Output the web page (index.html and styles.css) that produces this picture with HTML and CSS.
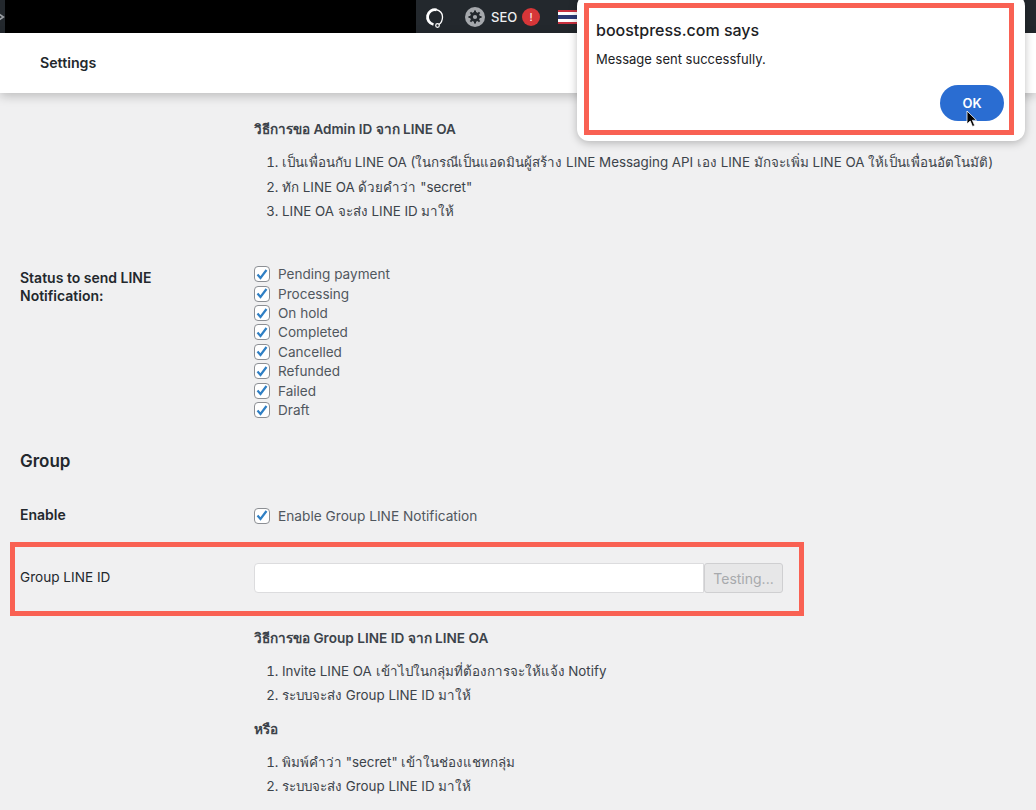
FILE: index.html
```html
<!DOCTYPE html>
<html lang="th">
<head>
<meta charset="utf-8">
<title>Settings</title>
<link rel="stylesheet" href="styles.css">
</head>
<body>
<div class="adminbar">
  <div class="bar-left"><svg class="bar-diamond" width="6" height="14" viewBox="0 0 6 14"><path d="M-2 3l6 4-6 4" fill="none" stroke="#9a9ea3" stroke-width="2"/></svg></div>
  <div class="bar-black"></div>
  <div class="bar-dark">
    <svg class="bar-q" width="20" height="24" viewBox="0 0 20 24"><path d="M8.500 19.500A7.500 7.500 0 1 1 11.500 4.800" fill="none" stroke="#fff" stroke-width="2.800"/><path d="M11 4.500c4 1 6.500 4 6.500 7.500 0 3.500-1.500 6-3.500 7.500" fill="none" stroke="#fff" stroke-width="1.300"/><circle cx="12.500" cy="20.500" r="1.800" fill="none" stroke="#fff" stroke-width="1.200"/></svg>
    <svg class="bar-gear" width="20" height="20" viewBox="0 0 20 20"><circle cx="10" cy="10" r="10" fill="#a5a8ac"/><circle cx="10" cy="10" r="3.500" fill="none" stroke="#23282d" stroke-width="2.800"/><path d="M10 3.500v3M10 13.500v3M3.500 10h3M13.500 10h3M5.400 5.400l2 2M12.600 12.600l2 2M14.600 5.400l-2 2M7.400 12.600l-2 2" stroke="#23282d" stroke-width="2"/></svg>
    <span class="bar-seo">SEO</span>
    <span class="bar-badge">!</span>
    <span class="bar-flag"></span>
  </div>
</div>
<header class="subhead"><span class="subhead-title">Settings</span></header>
<main class="content">
  <section class="help help-admin">
    <h4 class="help-title">วิธีการขอ Admin ID จาก LINE OA</h4>
    <ol class="help-list">
      <li>เป็นเพื่อนกับ LINE OA (ในกรณีเป็นแอดมินผู้สร้าง LINE Messaging API เอง LINE มักจะเพิ่ม LINE OA ให้เป็นเพื่อนอัตโนมัติ)</li>
      <li>ทัก LINE OA ด้วยคำว่า "secret"</li>
      <li>LINE OA จะส่ง LINE ID มาให้</li>
    </ol>
  </section>
  <section class="row row-status">
    <div class="label label-bold">Status to send LINE Notification:</div>
    <div class="checks">
      <label class="check"><span class="box"><svg width="12" height="11" viewBox="0 0 12 11"><path d="M1.500 5.500l3 3.500 6-8" fill="none" stroke="#2f7fc4" stroke-width="2.200"/></svg></span>Pending payment</label>
      <label class="check"><span class="box"><svg width="12" height="11" viewBox="0 0 12 11"><path d="M1.500 5.500l3 3.500 6-8" fill="none" stroke="#2f7fc4" stroke-width="2.200"/></svg></span>Processing</label>
      <label class="check"><span class="box"><svg width="12" height="11" viewBox="0 0 12 11"><path d="M1.500 5.500l3 3.500 6-8" fill="none" stroke="#2f7fc4" stroke-width="2.200"/></svg></span>On hold</label>
      <label class="check"><span class="box"><svg width="12" height="11" viewBox="0 0 12 11"><path d="M1.500 5.500l3 3.500 6-8" fill="none" stroke="#2f7fc4" stroke-width="2.200"/></svg></span>Completed</label>
      <label class="check"><span class="box"><svg width="12" height="11" viewBox="0 0 12 11"><path d="M1.500 5.500l3 3.500 6-8" fill="none" stroke="#2f7fc4" stroke-width="2.200"/></svg></span>Cancelled</label>
      <label class="check"><span class="box"><svg width="12" height="11" viewBox="0 0 12 11"><path d="M1.500 5.500l3 3.500 6-8" fill="none" stroke="#2f7fc4" stroke-width="2.200"/></svg></span>Refunded</label>
      <label class="check"><span class="box"><svg width="12" height="11" viewBox="0 0 12 11"><path d="M1.500 5.500l3 3.500 6-8" fill="none" stroke="#2f7fc4" stroke-width="2.200"/></svg></span>Failed</label>
      <label class="check"><span class="box"><svg width="12" height="11" viewBox="0 0 12 11"><path d="M1.500 5.500l3 3.500 6-8" fill="none" stroke="#2f7fc4" stroke-width="2.200"/></svg></span>Draft</label>
    </div>
  </section>
  <h3 class="group-title">Group</h3>
  <section class="row row-enable">
    <div class="label label-bold label-enable">Enable</div>
    <label class="check check-enable"><span class="box"><svg width="12" height="11" viewBox="0 0 12 11"><path d="M1.500 5.500l3 3.500 6-8" fill="none" stroke="#2f7fc4" stroke-width="2.200"/></svg></span>Enable Group LINE Notification</label>
  </section>
  <section class="row row-group">
    <div class="label label-id">Group LINE ID</div>
    <div class="field">
      <input class="text-input" type="text" aria-label="Group LINE ID">
      <button class="test-btn" type="button" disabled>Testing...</button>
    </div>
  </section>
  <section class="help help-group">
    <h4 class="help-title help-title-wide">วิธีการขอ Group LINE ID จาก LINE OA</h4>
    <ol class="help-list help-list-tight">
      <li>Invite LINE OA เข้าไปในกลุ่มที่ต้องการจะให้แจ้ง Notify</li>
      <li>ระบบจะส่ง Group LINE ID มาให้</li>
    </ol>
    <h4 class="help-title help-or">หรือ</h4>
    <ol class="help-list help-list-tight">
      <li>พิมพ์คำว่า "secret" เข้าในช่องแชทกลุ่ม</li>
      <li>ระบบจะส่ง Group LINE ID มาให้</li>
    </ol>
  </section>
</main>
<div class="highlight"></div>
<div class="dialog">
  <div class="dialog-frame">
    <div class="dialog-title">boostpress.com says</div>
    <div class="dialog-msg">Message sent successfully.</div>
    <div class="dialog-actions"><span class="ok">OK</span></div>
  </div>
  <svg class="cursor" width="12" height="18" viewBox="0 0 12 18"><path d="M1 1v13l3.200-3 2.300 5.500 2.200-1-2.300-5.200H10.500z" fill="#000" stroke="#fff" stroke-width="0.800"/></svg>
</div>
</body>
</html>
```
FILE: styles.css
```css
* { box-sizing: border-box; }
html, body { margin: 0; padding: 0; }
body {
  width: 1036px;
  height: 810px;
  overflow: hidden;
  position: relative;
  background: #f0f0f1;
  color: #3c434a;
  font-family: "Inter", "Noto Sans", "Noto Sans CJK SC", sans-serif;
  font-size: 14px;
}
.adminbar { display: flex; height: 33px; background: #000; }
.bar-left { width: 5px; background: #23282d; display: flex; align-items: center; }
.bar-diamond { display: block; }
.bar-black { width: 411px; background: #000; }
.bar-dark {
  flex: 1;
  background: #23282d;
  display: flex;
  align-items: center;
  padding-left: 9px;
  color: #fff;
}
.bar-q { margin-right: 20px; }
.bar-gear { margin-right: 6px; }
.bar-seo { font-size: 13px; font-weight: 500; margin-right: 5px; color: #eef0f1; }
.bar-badge {
  width: 18px; height: 18px; border-radius: 50%;
  background: #d63638; color: #fff;
  font-size: 11px; text-align: center; line-height: 18px;
  margin-right: 18px;
}
.bar-flag {
  width: 20px; height: 14px;
  background: linear-gradient(#c8313f 0 17%, #fff 17% 33%, #2d3a75 33% 67%, #fff 67% 83%, #c8313f 83%);
}
.subhead {
  height: 60px;
  background: #fff;
  padding: 0 40px 2px;
  display: flex;
  align-items: center;
  box-shadow: 0 3px 10px rgba(0,0,0,.22);
  position: relative;
}
.subhead-title { font-size: 14.200px; font-weight: 600; color: #23282d; }
.content { padding: 0 20px; }
.help { padding-left: 234px; }
.help-admin { padding-top: 27px; }
.help-title { margin: 0; font-size: 13.500px; font-weight: 600; line-height: 18px; color: #3c434a; }
.help-title-wide { font-size: 13.600px; }
.help-list { margin: 12px 0 0; padding: 0 0 0 28px; font-size: 13.370px; line-height: 24.500px; }
.help-list-tight { line-height: 24px; }
.row { display: flex; }
.label { width: 234px; flex: none; font-size: 14px; line-height: 18px; color: #23282d; }
.label-id { font-size: 13.600px; }
.label-bold { font-weight: 600; }
.row-status { margin-top: 41px; }
.row-status .label { padding-top: 4px; padding-right: 70px; }
.checks { display: flex; flex-direction: column; }
.check { display: flex; align-items: center; height: 19.430px; font-size: 13.550px; color: #50575e; }
.box {
  width: 16px; height: 16px; flex: none;
  margin-right: 8px;
  border: 1px solid #8c8f94;
  border-radius: 4px;
  background: #fff;
  display: flex; align-items: center; justify-content: center;
}
.group-title { margin: 29px 0 0; font-size: 17px; line-height: 24px; font-weight: 600; color: #23282d; }
.row-enable { margin-top: 33px; }
.check-enable { font-size: 13.700px; }
.row-group { margin-top: 38px; align-items: center; }
.label-id { margin-top: -2px; }
.field { display: flex; }
.text-input {
  width: 450px; height: 30px; padding: 0 8px;
  background: #fff;
  border: 1px solid #dcdcde;
  border-radius: 4px 0 0 4px;
  outline: none;
}
.test-btn {
  width: 79px; height: 30px; padding: 0;
  background: #e7e7e8;
  border: 1px solid #cfcfd1;
  border-radius: 3px;
  color: #a7aaad;
  font: 14px "Inter", "Noto Sans", sans-serif;
}
.help-group { padding-top: 36px; }
.help-or { margin-top: 13px; }
.highlight {
  position: absolute;
  left: 10px; top: 542px;
  width: 794px; height: 74px;
  border: 5px solid #f96153;
}
.dialog {
  position: absolute;
  left: 577px; top: -6px;
  width: 448px; height: 147px;
  background: #fff;
  border-radius: 12px;
  box-shadow: 0 2px 8px rgba(0,0,0,.25);
}
.dialog-frame {
  position: absolute;
  left: 7px; top: 9px;
  width: 430px; height: 132px;
  border: 5px solid #f96153;
  padding: 0 5px 0 7px;
  display: flex;
  flex-direction: column;
}
.dialog-title { margin-top: 12px; font-size: 16px; line-height: 20px; color: #202124; font-weight: 500; }
.dialog-msg { margin-top: 11px; font-size: 13px; line-height: 16px; color: #202124; }
.dialog-actions { margin-top: 18px; display: flex; justify-content: flex-end; }
.ok {
  width: 64px; height: 36px; border-radius: 18px;
  background: #2a6dd2; color: #fff;
  font-size: 13px; font-weight: 600;
  display: flex; align-items: center; justify-content: center;
}
.cursor { position: absolute; left: 389px; top: 116px; }
```
